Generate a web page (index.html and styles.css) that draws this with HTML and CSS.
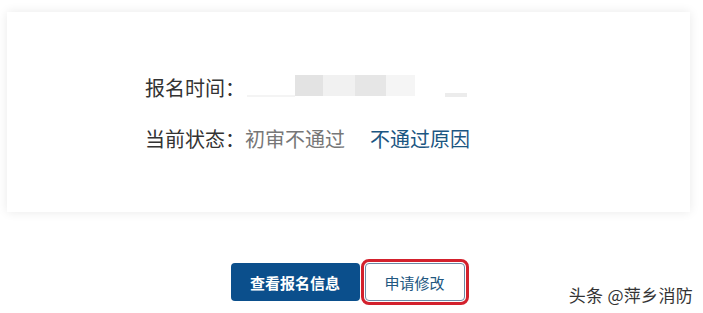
FILE: index.html
```html
<!DOCTYPE html>
<html lang="zh-CN">
<head>
<meta charset="utf-8">
<link rel="stylesheet" href="styles.css">
</head>
<body>
<div class="page">
  <div class="card">
    <div class="row">
      <span class="label">报名时间：</span>
      <span class="blur">
        <span class="b line1"></span>
        <span class="b blk c1"></span>
        <span class="b blk c2"></span>
        <span class="b blk c3"></span>
        <span class="b blk c4"></span>
        <span class="b line2"></span>
      </span>
    </div>
    <div class="row">
      <span class="label">当前状态：</span><span class="status">初审不通过</span><a class="reason">不通过原因</a>
    </div>
  </div>
  <div class="actions">
    <button class="btn primary">查看报名信息</button>
    <button class="btn secondary">申请修改</button>
  </div>
  <div class="watermark">头条 @萍乡消防</div>
</div>
</body>
</html>
```
FILE: styles.css
```css
html, body {
  margin: 0;
  padding: 0;
  background: #fff;
}
.page {
  position: relative;
  width: 703px;
  height: 313px;
  overflow: hidden;
  font-family: "Noto Sans CJK SC", "Noto Sans", sans-serif;
}
.card {
  margin: 12px 13px 0 7px;
  height: 200px;
  box-sizing: border-box;
  padding: 61px 0 0 138px;
  background: #fff;
  box-shadow: 0 0 10px rgba(0, 0, 0, 0.09);
  display: flex;
  flex-direction: column;
  gap: 21px;
}
.row {
  display: flex;
  align-items: center;
  height: 30px;
  font-size: 20px;
  line-height: 30px;
  color: #333;
}
.label {
  color: #333;
}
.status {
  color: #777;
}
.reason {
  color: #1b5682;
  margin-left: 25px;
}
.blur {
  display: flex;
  align-items: flex-start;
  height: 30px;
  margin-left: 2px;
}
.b {
  display: block;
}
.line1 {
  width: 48px;
  height: 2px;
  background: #f4f4f4;
  margin-top: 22px;
}
.blk {
  height: 21px;
  margin-top: 2px;
}
.c1 { width: 28px; background: #e3e3e3; }
.c2 { width: 32px; background: #f1f1f1; }
.c3 { width: 31px; background: #e6e6e6; }
.c4 { width: 29px; background: #f5f5f5; }
.line2 {
  width: 22px;
  height: 4px;
  background: #ececec;
  margin: 20px 0 0 30px;
}
.actions {
  display: flex;
  justify-content: center;
  gap: 5px;
  margin-top: 51px;
  padding-right: 8px;
}
.btn {
  height: 38px;
  border-radius: 4px;
  font-family: "Noto Sans CJK SC", sans-serif;
  font-size: 15px;
  padding: 0;
  cursor: pointer;
}
.primary {
  width: 129px;
  background: #0b4f8c;
  color: #fff;
  font-weight: bold;
  border: none;
}
.secondary {
  width: 100px;
  background: #fff;
  color: #22577f;
  border: 1px solid #6b8aa6;
  outline: 3px solid #d3212d;
  outline-offset: 1px;
}
.watermark {
  position: absolute;
  right: 10px;
  top: 282px;
  font-size: 17px;
  color: #333;
  letter-spacing: 0.3px;
  text-shadow: 0 0 2px #fff;
}
```
